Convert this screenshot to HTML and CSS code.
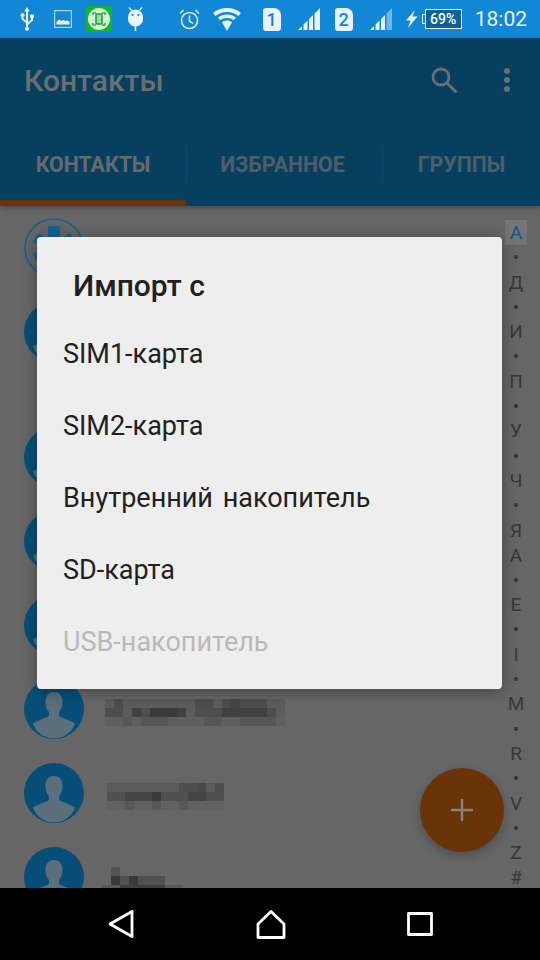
FILE: index.html
```html
<!DOCTYPE html>
<html lang="ru">

<head>
    <meta charset="UTF-8">
    <meta name="viewport" content="width=device-width, initial-scale=1.0">
    <title>Контакты</title>
    <link rel="stylesheet" href="styles.css">
</head>

<body>
    <div class="phone">
        <!-- status bar -->
        <div class="status">
            <div class="status-left">
                <svg class="ic" width="16" height="24" viewBox="0 0 16 24" fill="#e8f3fb">
                    <path d="M8 0l2.800 4.500H9V15l3-2.500V11h-1V7.500h4V11h-1v2.500L9 18v2.100a2 2 0 1 1-2 0V16L2.500 12.300V10a2 2 0 1 1 2 0v1.500L7 13.700V4.500H5.200z" />
                </svg>
                <svg class="ic" width="18" height="18" viewBox="0 0 18 18">
                    <rect x="0.600" y="0.600" width="16.800" height="16.800" fill="none" stroke="#a9d4f1" stroke-width="1.200" />
                    <path d="M2.500 14.500V12l2.500-2.500 2.500 1.500 2-1 2 1 2-.5 2 1.500v2.500z" fill="#e8f3fb" />
                </svg>
                <div class="app-icon">
                    <svg width="26" height="26" viewBox="0 0 26 26">
                        <circle cx="13" cy="13" r="11" fill="#d6f1d6" />
                        <path d="M7 9V7h3M16 7h3v2M7 17v2h3M16 19h3v-2" fill="none" stroke="#2fae3e" stroke-width="1.500" />
                        <rect x="10" y="8" width="6" height="10" rx="1" fill="#9edca5" stroke="#1d9a30" stroke-width="1.500" />
                    </svg>
                </div>
                <svg class="ic" width="17" height="24" viewBox="0 0 17 24" fill="#e8f3fb">
                    <path d="M2 .5l2.500 3M15 .5l-2.500 3" stroke="#e8f3fb" stroke-width="1.200" />
                    <path d="M8.500 2.500a7.500 7.500 0 0 1 7.500 7.500v2a7.500 7.500 0 0 1-6.700 7.400V24H7.700v-4.600A7.500 7.500 0 0 1 1 12v-2a7.500 7.500 0 0 1 7.500-7.500z" />
                    <circle cx="5.500" cy="8" r="1.100" fill="#1287d6" />
                    <circle cx="11.500" cy="8" r="1.100" fill="#1287d6" />
                </svg>
            </div>
            <div class="status-right">
                <svg class="ic" width="21" height="21" viewBox="0 0 21 21" fill="none" stroke="#e8f3fb" stroke-width="1.500">
                    <circle cx="10.500" cy="11.500" r="8" />
                    <path d="M10.500 6.500v5.500l3.500 2.500M1 4.500L4.500 1M20 4.500L16.500 1" />
                </svg>
                <svg class="ic" width="28" height="23" viewBox="0 0 28 23" fill="#e8f3fb">
                    <path d="M14 0c5.500 0 10 1.800 14 5l-2.500 3C22 5.300 18.200 4 14 4S6 5.300 2.500 8L0 5c4-3.200 8.500-5 14-5z" />
                    <path d="M14 6.500c3.500 0 6.500 1 9 3l-2.300 2.800C18.800 10.800 16.500 10 14 10s-4.800.8-6.700 2.300L5 9.500c2.500-2 5.500-3 9-3z" />
                    <path d="M14 12.500c2 0 3.500.6 5 1.700L14 23l-5-8.800c1.500-1.100 3-1.700 5-1.700z" />
                </svg>
                <div class="sim sim-first">1</div>
                <svg class="ic sig" width="22" height="22" viewBox="0 0 22 22" fill="#e8f3fb">
                    <path d="M0 22l4-4v4zM5.500 22v-5.500l4-4V22zM11 22V11l4-4v15zM16.500 22V5.500L22 0v22z" />
                </svg>
                <div class="sim sim-second">2</div>
                <svg class="ic sig" width="22" height="22" viewBox="0 0 22 22" fill="#e8f3fb">
                    <path d="M0 22l4-4v4zM5.500 22v-5.500l4-4V22zM11 22V11l4-4v15z" />
                    <path d="M16.500 22V5.500L22 0v22z" fill="#6db8ea" />
                </svg>
                <svg class="ic" width="13" height="18" viewBox="0 0 13 18" fill="#e8f3fb">
                    <path d="M10 0L1 10.500h4.500L3 18l9.500-11.500H7.500z" />
                </svg>
                <div class="battery">
                    <span class="battery-cap"></span>
                    <span class="battery-val">69%</span>
                </div>
                <span class="clock">18:02</span>
            </div>
        </div>

        <!-- app bar + list, dimmed by the overlay -->
        <div class="appbar">
            <div class="appbar-top">
                <h1>Контакты</h1>
                <svg class="search" width="27" height="26" viewBox="0 0 27 26" fill="none" stroke="#6b6e70" stroke-width="2.800">
                    <circle cx="10" cy="10" r="8" />
                    <path d="M16 16l9.500 9.500" />
                </svg>
                <div class="dots"><i></i><i></i><i></i></div>
            </div>
            <div class="tabs">
                <div class="tab tab-on"><div class="tab-label">КОНТАКТЫ</div></div>
                <div class="tab"><div class="tab-label tab-mid">ИЗБРАННОЕ</div></div>
                <div class="tab"><div class="tab-label">ГРУППЫ</div></div>
            </div>
        </div>

        <div class="list">
            <div class="row">
                <svg class="avatar" viewBox="0 0 60 60">
                    <circle cx="30" cy="30" r="29" fill="none" stroke="#0e6592" stroke-width="1.500" />
                    <path d="M24 8h12v13l10-6 5 9-11 6 11 6-5 9-10-6v13H24V39l-10 6-5-9 11-6-11-6 5-9 10 6z" fill="#0e6592" />
                </svg>
            </div>
            <div class="row">
                <svg class="avatar" viewBox="0 0 60 60"><use href="#person" /></svg>
            </div>
            <div class="row row-section">
                <svg class="avatar" viewBox="0 0 60 60"><use href="#person" /></svg>
            </div>
            <div class="row">
                <svg class="avatar" viewBox="0 0 60 60"><use href="#person" /></svg>
            </div>
            <div class="row">
                <svg class="avatar" viewBox="0 0 60 60"><use href="#person" /></svg>
            </div>
            <div class="row">
                <svg class="avatar" viewBox="0 0 60 60"><use href="#person" /></svg>
                <svg class="blur blur-a" width="180" height="27" viewBox="0 0 20 3" shape-rendering="crispEdges" fill="none">
                    <path d="M0 .5h20" stroke="#5c5c5c" />
                    <path d="M1 .5h1M10 .5h2M13 .5h5" stroke="#4d4d4d" />
                    <path d="M14 .5h1" stroke="#454545" />
                    <path d="M0 1.500h2M3 1.500h6M10 1.500h9" stroke="#4e4e4e" />
                    <path d="M3 1.500h1M5 1.500h5M13 1.500h5" stroke="#414141" />
                    <path d="M5 1.500h3" stroke="#3a3a3a" />
                    <path d="M2 1.500h1M9 1.500h1M19 1.500h1" stroke="#5c5c5c" />
                    <path d="M0 2.500h20" stroke="#5f5f5f" />
                    <path d="M2 2.500h1M4 2.500h3M11 2.500h2M15 2.500h4" stroke="#565656" />
                </svg>
            </div>
            <div class="row">
                <svg class="avatar" viewBox="0 0 60 60"><use href="#person" /></svg>
                <svg class="blur blur-b" width="117" height="27" viewBox="0 0 13 3" shape-rendering="crispEdges" fill="none">
                    <path d="M0 .5h13" stroke="#5a5a5a" />
                    <path d="M8 .5h2M12 .5h1" stroke="#4e4e4e" />
                    <path d="M10 .5h1" stroke="#484848" />
                    <path d="M0 1.500h13" stroke="#505050" />
                    <path d="M2 1.500h3M9 1.500h2" stroke="#444" />
                    <path d="M5 1.500h1" stroke="#393939" />
                    <path d="M0 2.500h13" stroke="#616161" />
                    <path d="M2 2.500h1M5 2.500h1M8 2.500h1" stroke="#585858" />
                </svg>
            </div>
            <div class="row">
                <svg class="avatar" viewBox="0 0 60 60"><use href="#person" /></svg>
                <svg class="blur blur-c" width="81" height="27" viewBox="0 0 9 3" shape-rendering="crispEdges" fill="none">
                    <path d="M1 .5h1" stroke="#555" />
                    <path d="M1 1.500h6" stroke="#505050" />
                    <path d="M1 1.500h1M3 1.500h1" stroke="#3a3a3a" />
                    <path d="M0 2.500h9" stroke="#585858" />
                    <path d="M2 2.500h5" stroke="#3f3f3f" />
                </svg>
            </div>
        </div>

        <div class="index">
            <span class="index-on">А</span><b></b><span>Д</span><b></b><span>И</span><b></b><span>П</span><b></b><span>У</span><b></b><span>Ч</span><b></b><span>Я</span>
            <span>A</span><b></b><span>E</span><b></b><span>I</span><b></b><span>M</span><b></b><span>R</span><b></b><span>V</span><b></b><span>Z</span><span>#</span>
        </div>

        <div class="fab">
            <svg width="22" height="22" viewBox="0 0 22 22" fill="#85817c">
                <path d="M9.800 0h2.400v9.800H22v2.400h-9.800V22H9.800v-9.800H0V9.800h9.800z" />
            </svg>
        </div>

        <!-- import dialog -->
        <div class="dialog">
            <h2>Импорт с</h2>
            <div class="item">SIM1-карта</div>
            <div class="item">SIM2-карта</div>
            <div class="item">Внутренний накопитель</div>
            <div class="item">SD-карта</div>
            <div class="item item-off">USB-накопитель</div>
        </div>

        <!-- nav bar -->
        <div class="nav">
            <svg width="26" height="28" viewBox="0 0 26 28" fill="none" stroke="#fff" stroke-width="2.800" stroke-linejoin="round">
                <path d="M24 1.500v25L2 14z" />
            </svg>
            <svg width="30" height="29" viewBox="0 0 30 29" fill="none" stroke="#fff" stroke-width="2.800" stroke-linejoin="round">
                <path d="M15 1.500L28 14v13.500H2V14z" />
            </svg>
            <svg width="26" height="24" viewBox="0 0 26 24" fill="none" stroke="#fff" stroke-width="2.800" stroke-linejoin="round">
                <rect x="1.500" y="1.500" width="23" height="21" />
            </svg>
        </div>
    </div>

    <svg width="0" height="0" class="defs">
        <defs>
            <g id="person">
                <circle cx="30" cy="30" r="30" fill="#074f78" />
                <clipPath id="disc"><circle cx="30" cy="30" r="30" /></clipPath>
                <path clip-path="url(#disc)" d="M30 13c5.500 0 8.500 4 8.500 10 0 4.500-1.500 8-3.500 10v3.500c0 2 9 3.500 16 8 -3 9-12 15-21 15S12 53.500 9 44.500c7-4.500 16-6 16-8V33c-2-2-3.500-5.500-3.500-10 0-6 3-10 8.500-10z" fill="#5b6f7b" />
            </g>
        </defs>
    </svg>
</body>

</html>
```

FILE: styles.css
```css
* {
    box-sizing: border-box;
}

body {
    margin: 0;
    font-family: Roboto, "Liberation Sans", sans-serif;
    background-color: #000;
}

.phone {
    position: relative;
    width: 540px;
    height: 960px;
    display: flex;
    flex-direction: column;
    overflow: hidden;
    background-color: #666;
}

.defs {
    position: absolute;
}

/* status bar */
.status {
    height: 38px;
    flex: none;
    display: flex;
    justify-content: space-between;
    align-items: center;
    padding: 0 13px 0 19px;
    background-color: #1287d6;
}

.status-left,
.status-right {
    display: flex;
    align-items: center;
}

.status-left {
    gap: 14px;
}

.status-left .ic:first-child {
    margin-right: 5px;
}

.status-right {
    gap: 13px;
}

.ic {
    display: block;
}

.app-icon {
    width: 26px;
    height: 26px;
    margin-right: 1px;
    border-radius: 3px;
    background-color: #10b52b;
}

.sim {
    width: 18px;
    height: 23px;
    border-radius: 3px 7px 3px 3px;
    background-color: #e8f3fb;
    color: #1287d6;
    font-size: 18px;
    font-weight: 500;
    line-height: 23px;
    text-align: center;
}

.sim-first {
    margin-left: 9px;
}

.sim-second {
    margin-left: 2px;
}

.sig {
    margin-left: 4px;
}

.battery {
    position: relative;
    width: 37px;
    height: 20px;
    margin-left: -6px;
    border: 1px solid #e8f3fb;
    background-color: #0f6198;
    color: #fff;
    font-size: 14px;
    font-weight: 500;
    line-height: 18px;
    text-align: center;
}

.battery-cap {
    position: absolute;
    left: -4px;
    top: 4px;
    width: 3px;
    height: 10px;
    border: 1px solid #e8f3fb;
    border-right: none;
}

.clock {
    color: #e8f3fb;
    font-size: 21px;
}

/* app bar */
.appbar {
    height: 168px;
    flex: none;
    display: flex;
    flex-direction: column;
    justify-content: space-between;
    background-color: #07405f;
    box-shadow: 0 2px 5px rgba(0, 0, 0, 0.3);
    z-index: 1;
}

.appbar-top {
    display: flex;
    align-items: center;
    height: 84px;
    padding: 0 30px 0 24px;
}

h1 {
    flex: 1;
    margin: 0;
    color: #6b6e70;
    font-size: 30px;
    font-weight: 500;
}

.search {
    margin-right: 46px;
}

.dots {
    display: flex;
    flex-direction: column;
    gap: 3px;
}

.dots i {
    width: 6px;
    height: 6px;
    border-radius: 50%;
    background-color: #6b6e70;
}

.tabs {
    display: grid;
    grid-template-columns: 186px 196px 158px;
    height: 60px;
}

.tab-label {
    height: 36px;
    color: #4c5e69;
    font-size: 21.3px;
    font-weight: 700;
    text-align: center;
    line-height: 38px;
}

.tab + .tab .tab-label {
    border-left: 1px solid #0b4a6d;
}

.tab-mid {
    padding-right: 4px;
}

.tab-on {
    border-bottom: 6px solid #693407;
}

.tab-on .tab-label {
    color: #666a6c;
}

/* list behind the dialog */
.list {
    flex: 1;
    display: flex;
    flex-direction: column;
    overflow: hidden;
}

.row {
    height: 84px;
    flex: none;
    display: flex;
    align-items: center;
    padding-left: 24px;
}

.row-section {
    margin-top: 41px;
}

.avatar {
    width: 60px;
    height: 60px;
    flex: none;
}

.blur {
    flex: none;
    margin-top: 7px;
}

.blur-a {
    margin-left: 21px;
}

.blur-b {
    margin-left: 23px;
}

.blur-c {
    margin-left: 18px;
}

.index {
    position: absolute;
    top: 220px;
    left: 505px;
    width: 22px;
    display: flex;
    flex-direction: column;
    align-items: center;
    color: #383838;
    font-size: 19px;
}

.index span {
    height: 25px;
    line-height: 25px;
}

.index b {
    flex: none;
    width: 4px;
    height: 4px;
    margin: 10.300px 0;
    border-radius: 50%;
    background-color: #333;
}

.index .index-on {
    width: 22px;
    background-color: #757575;
    color: #0a5a8c;
    text-align: center;
}

.fab {
    position: absolute;
    left: 420px;
    top: 768px;
    width: 84px;
    height: 84px;
    display: flex;
    align-items: center;
    justify-content: center;
    border-radius: 50%;
    background-color: #693407;
    box-shadow: 0 4px 10px rgba(0, 0, 0, 0.25);
}

/* dialog */
.dialog {
    position: absolute;
    left: 37px;
    top: 237px;
    width: 465px;
    height: 452px;
    padding: 29px 0 0 26px;
    border-radius: 4px;
    background-color: #eee;
    box-shadow: 0 2px 16px rgba(0, 0, 0, 0.35);
}

h2 {
    margin: 0 0 12px 10px;
    color: #212121;
    font-size: 30px;
    font-weight: 500;
    line-height: 40px;
}

.item {
    height: 72px;
    color: #212121;
    font-size: 27px;
    line-height: 72px;
    word-spacing: 3px;
}

.item-off {
    color: #b9b9b9;
}

/* nav bar */
.nav {
    height: 72px;
    flex: none;
    display: flex;
    align-items: center;
    padding: 0 107px 0 108px;
    justify-content: space-between;
    background-color: #000;
    z-index: 2;
}
```
